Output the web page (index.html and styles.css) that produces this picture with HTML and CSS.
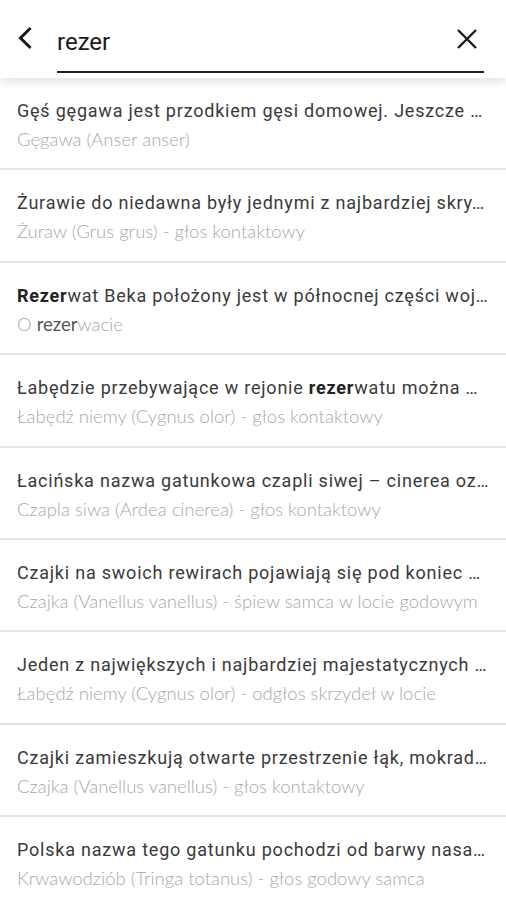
FILE: index.html
```html
<!DOCTYPE html>
<html lang="pl">
<head>
    <meta charset="UTF-8">
    <title>Szukaj</title>
    <link rel="stylesheet" href="styles.css">
</head>
<body>
    <div class="search-bar">
        <button class="icon-button back-button" aria-label="Wstecz">
            <svg width="24" height="24" viewBox="0 0 24 24"><path d="M15.5 3 L6.5 12 L15.5 21" fill="none" stroke="#1a1a1a" stroke-width="3" stroke-linecap="square"/></svg>
        </button>
        <div class="search-field">
            <span class="search-text">rezer</span>
        </div>
        <button class="icon-button clear-button" aria-label="Wyczyść">
            <svg width="22" height="22" viewBox="0 0 22 22"><path d="M2 2 L20 20 M20 2 L2 20" fill="none" stroke="#1a1a1a" stroke-width="2.4"/></svg>
        </button>
    </div>

    <ul class="results">
        <li class="result">
            <p class="result-title">Gęś gęgawa jest przodkiem gęsi domowej. Jeszcze …</p>
            <p class="result-sub">Gęgawa (Anser anser)</p>
        </li>
        <li class="result">
            <p class="result-title">Żurawie do niedawna były jednymi z najbardziej skry…</p>
            <p class="result-sub">Żuraw (Grus grus) - głos kontaktowy</p>
        </li>
        <li class="result">
            <p class="result-title"><b>Rezer</b>wat Beka położony jest w północnej części woj…</p>
            <p class="result-sub">O <b>rezer</b>wacie</p>
        </li>
        <li class="result">
            <p class="result-title">Łabędzie przebywające w rejonie <b>rezer</b>watu można …</p>
            <p class="result-sub">Łabędź niemy (Cygnus olor) - głos kontaktowy</p>
        </li>
        <li class="result">
            <p class="result-title">Łacińska nazwa gatunkowa czapli siwej – cinerea oz…</p>
            <p class="result-sub">Czapla siwa (Ardea cinerea) - głos kontaktowy</p>
        </li>
        <li class="result">
            <p class="result-title">Czajki na swoich rewirach pojawiają się pod koniec …</p>
            <p class="result-sub">Czajka (Vanellus vanellus) - śpiew samca w locie godowym</p>
        </li>
        <li class="result">
            <p class="result-title">Jeden z największych i najbardziej majestatycznych …</p>
            <p class="result-sub">Łabędź niemy (Cygnus olor) - odgłos skrzydeł w locie</p>
        </li>
        <li class="result">
            <p class="result-title">Czajki zamieszkują otwarte przestrzenie łąk, mokrad…</p>
            <p class="result-sub">Czajka (Vanellus vanellus) - głos kontaktowy</p>
        </li>
        <li class="result">
            <p class="result-title">Polska nazwa tego gatunku pochodzi od barwy nasa…</p>
            <p class="result-sub">Krwawodziób (Tringa totanus) - głos godowy samca</p>
        </li>
    </ul>
</body>
</html>
```

FILE: styles.css
```css
body {
    margin: 0;
    background-color: #fff;
    font-family: Roboto, "Noto Sans", sans-serif;
    color: #333;
    overflow: hidden;
}

.search-bar {
    position: relative;
    z-index: 1;
    display: flex;
    align-items: center;
    height: 78px;
    padding: 0 22px 0 12px;
    background-color: #fff;
    box-shadow: 0 3px 10px rgba(0, 0, 0, 0.13);
}

.icon-button {
    display: flex;
    align-items: center;
    justify-content: center;
    padding: 0;
    border: none;
    background: none;
    cursor: pointer;
}

.back-button {
    width: 28px;
    height: 28px;
    margin: 0 17px 2px 0;
}

.search-field {
    flex: 1;
    height: 46px;
    margin-top: 22px;
    border-bottom: 2px solid #222;
    box-sizing: border-box;
}

.search-text {
    font-size: 24px;
    line-height: 30px;
    color: #1a1a1a;
}

.clear-button {
    position: absolute;
    right: 28px;
    top: 28px;
    width: 22px;
    height: 22px;
}

.results {
    list-style: none;
    margin: 0;
    padding: 0;
}

.result {
    padding: 21px 8px 17.4px 17px;
    border-top: 2px solid #e4e4e4;
}

.result:first-child {
    border-top: none;
}

.result p {
    margin: 0;
    white-space: nowrap;
}

.result-title {
    font-size: 18px;
    letter-spacing: 0.78px;
    line-height: 24px;
    color: #3a3a3a;
}

.result-title b {
    font-weight: 700;
    color: #222;
}

.result-sub {
    margin-top: 4px !important;
    font-family: Lato, "Open Sans", sans-serif;
    font-weight: 300;
    font-size: 18.5px;
    line-height: 24px;
    color: #a8a8a8;
}

.result-sub b {
    font-weight: 400;
    color: #555;
}
```
